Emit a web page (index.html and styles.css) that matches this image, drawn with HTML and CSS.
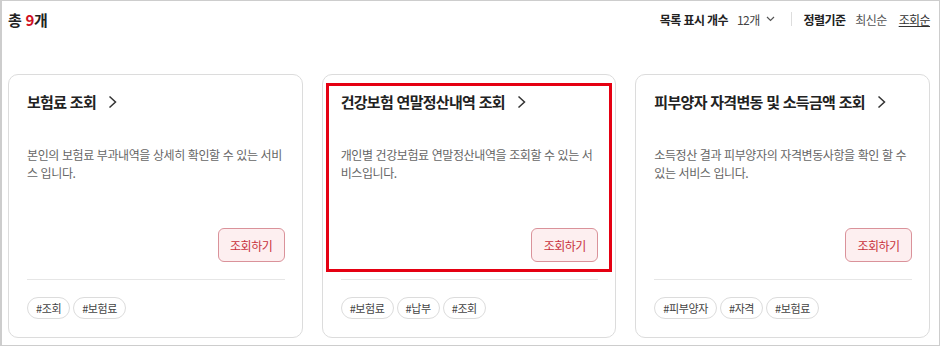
FILE: index.html
```html
<!DOCTYPE html>
<html lang="ko">
<head>
<meta charset="utf-8">
<title>서비스 목록</title>
<link rel="stylesheet" href="styles.css">
</head>
<body>
<div class="frame">
  <div class="toolbar">
    <div class="total">총 <em>9</em>개</div>
    <div class="controls">
      <span class="ctl-label">목록 표시 개수</span>
      <span class="select">12개
        <svg class="select-arrow" width="9" height="6" viewBox="0 0 9 6"><path d="M1 1l3.5 3.5L8 1" fill="none" stroke="#555" stroke-width="1.2"/></svg>
      </span>
      <span class="sep"></span>
      <span class="ctl-label">정렬기준</span>
      <span class="sort">최신순</span>
      <span class="sort active">조회순</span>
    </div>
  </div>

  <div class="cards">
    <div class="card">
      <h3 class="card-title">보험료 조회
        <svg class="chev" width="9" height="14" viewBox="0 0 9 14"><path d="M1.5 1.5l6 5.5-6 5.5" fill="none" stroke="#333" stroke-width="1.5"/></svg>
      </h3>
      <p class="card-desc">본인의 보험료 부과내역을 상세히 확인할 수 있는 서비스 입니다.</p>
      <div class="card-action"><button class="btn">조회하기</button></div>
      <div class="tags"><span class="tag">#조회</span><span class="tag">#보험료</span></div>
    </div>

    <div class="card">
      <h3 class="card-title">건강보험 연말정산내역 조회
        <svg class="chev" width="9" height="14" viewBox="0 0 9 14"><path d="M1.5 1.5l6 5.5-6 5.5" fill="none" stroke="#333" stroke-width="1.5"/></svg>
      </h3>
      <p class="card-desc">개인별 건강보험료 연말정산내역을 조회할 수 있는 서비스입니다.</p>
      <div class="card-action"><button class="btn">조회하기</button></div>
      <div class="tags"><span class="tag">#보험료</span><span class="tag">#납부</span><span class="tag">#조회</span></div>
      <div class="highlight"></div>
    </div>

    <div class="card">
      <h3 class="card-title">피부양자 자격변동 및 소득금액 조회
        <svg class="chev" width="9" height="14" viewBox="0 0 9 14"><path d="M1.5 1.5l6 5.5-6 5.5" fill="none" stroke="#333" stroke-width="1.5"/></svg>
      </h3>
      <p class="card-desc">소득정산 결과 피부양자의 자격변동사항을 확인 할 수 있는 서비스 입니다.</p>
      <div class="card-action"><button class="btn">조회하기</button></div>
      <div class="tags"><span class="tag">#피부양자</span><span class="tag">#자격</span><span class="tag">#보험료</span></div>
    </div>
  </div>
</div>
</body>
</html>
```

FILE: styles.css
```css
* { box-sizing: border-box; }
html, body { margin: 0; padding: 0; background: #fff; }
body {
  font-family: "Noto Sans CJK KR", "Noto Sans", sans-serif;
  color: #222;
}
.frame {
  width: 940px;
  height: 346px;
  border: 1px solid #cdcdcd;
  border-left-width: 2px;
  overflow: hidden;
}
.toolbar {
  display: flex;
  justify-content: space-between;
  align-items: center;
  height: 34px;
  padding: 2px 9px 0 6px;
}
.total {
  font-size: 15px;
  font-weight: 700;
  letter-spacing: -0.3px;
  color: #222;
}
.total em { font-style: normal; color: #d0101f; }
.controls {
  display: flex;
  align-items: center;
  font-size: 12px;
  letter-spacing: -0.6px;
}
.ctl-label { font-weight: 700; color: #222; }
.select {
  display: inline-flex;
  align-items: center;
  margin-left: 9px;
  color: #444;
}
.select-arrow { margin-left: 6px; }
.sep {
  width: 1px;
  height: 14px;
  background: #ddd;
  margin: 0 12px 0 16px;
}
.sort { color: #555; margin-left: 10px; }
.sort.active { color: #333; text-decoration: underline; margin-left: 12px; }

.cards {
  display: grid;
  grid-template-columns: repeat(3, 1fr);
  gap: 19px;
  padding: 39px 9px 0 6px;
}
.card {
  position: relative;
  border: 1px solid #dcdcdc;
  border-radius: 10px;
  padding: 17px 17px 17px 18px;
  height: 264px;
  display: flex;
  flex-direction: column;
}
.card-title {
  margin: 0;
  display: flex;
  align-items: center;
  font-size: 15px;
  line-height: 20px;
  font-weight: 700;
  letter-spacing: -0.7px;
  color: #222;
}
.chev { margin-left: 12px; }
.card-desc {
  margin: 34px 0 0;
  font-size: 12px;
  line-height: 18px;
  letter-spacing: -0.4px;
  color: #666;
  height: 36px;
}
.card-action {
  display: flex;
  justify-content: flex-end;
  margin-top: 46px;
  padding-bottom: 17px;
  border-bottom: 1px solid #e6e6e6;
}
.btn {
  width: 67px;
  height: 34px;
  border: 1px solid #da929a;
  background: #fdeff0;
  border-radius: 6px;
  color: #c8323c;
  font-family: inherit;
  font-size: 12px;
  letter-spacing: -0.5px;
  padding: 0;
}
.tags {
  display: flex;
  gap: 3px;
  margin-top: 17px;
}
.tag {
  height: 22px;
  line-height: 20px;
  padding: 0 8px;
  border: 1px solid #dcdcdc;
  border-radius: 11px;
  font-size: 11px;
  letter-spacing: -0.4px;
  color: #444;
}
.highlight {
  position: absolute;
  top: 8px;
  left: 3px;
  right: 3px;
  height: 189px;
  border: 3px solid #e50012;
  pointer-events: none;
}
```
